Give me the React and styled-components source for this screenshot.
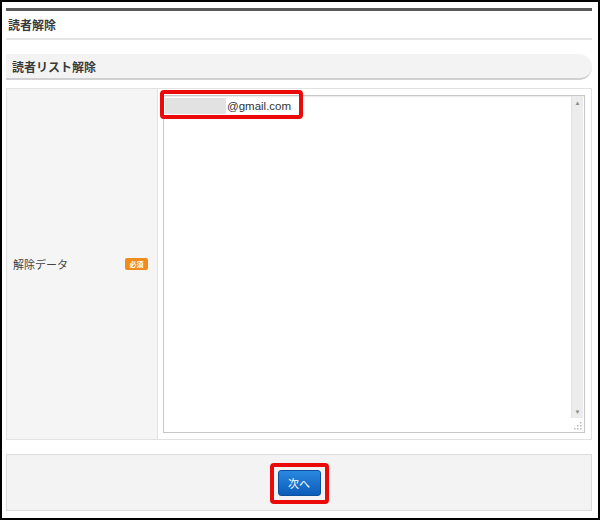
import styled, { createGlobalStyle } from "styled-components";

const GlobalStyle = createGlobalStyle`
  html, body {
    margin: 0;
    padding: 0;
    background: #fff;
  }
  * {
    box-sizing: border-box;
  }
`;

const App = () => {
  return (
    <>
      <GlobalStyle />
      <Frame>
        <PageTitle>読者解除</PageTitle>
        <SectionHeader>読者リスト解除</SectionHeader>
        <FormTable>
          <LabelCell>
            <Label>解除データ</Label>
            <Required>必須</Required>
          </LabelCell>
          <FieldCell>
            <TextBox>
              <TextContent>
                <Line>
                  <Masked />
                  @gmail.com
                </Line>
              </TextContent>
              <ScrollTrack>
                <Arrow>▲</Arrow>
                <Arrow>▼</Arrow>
              </ScrollTrack>
              <Grip>
                <svg width="8" height="8" viewBox="0 0 8 8">
                  <rect x="6" y="0" width="1.5" height="1.5" fill="#bbb" />
                  <rect x="3" y="3" width="1.5" height="1.5" fill="#bbb" />
                  <rect x="6" y="3" width="1.5" height="1.5" fill="#bbb" />
                  <rect x="0" y="6" width="1.5" height="1.5" fill="#bbb" />
                  <rect x="3" y="6" width="1.5" height="1.5" fill="#bbb" />
                  <rect x="6" y="6" width="1.5" height="1.5" fill="#bbb" />
                </svg>
              </Grip>
              <Highlight $top={-6} $left={-4} $width={143} $height={29} />
            </TextBox>
          </FieldCell>
        </FormTable>
        <Footer>
          <ButtonWrap>
            <NextButton>次へ</NextButton>
            <Highlight $top={-7} $left={-8} $width={59} $height={41} />
          </ButtonWrap>
        </Footer>
      </Frame>
    </>
  );
};

const Frame = styled.div`
  width: 600px;
  height: 520px;
  border: 2px solid #000;
  padding: 6px 6px 0 4px;
  font-family: "Liberation Sans", "Noto Sans CJK JP", sans-serif;
  color: #333;
  display: flex;
  flex-direction: column;
`;

const PageTitle = styled.div`
  border-top: 3px solid #5a5a5a;
  border-bottom: 2px solid #e6e6e6;
  height: 32px;
  padding-left: 2px;
  display: flex;
  align-items: center;
  font-size: 12px;
  font-weight: bold;
  color: #3a3a3a;
`;

const SectionHeader = styled.div`
  margin-top: 14px;
  height: 26px;
  background: #f3f3f3;
  border-bottom: 2px solid #d0d0d0;
  border-radius: 0 13px 13px 0;
  padding-left: 6px;
  display: flex;
  align-items: center;
  font-size: 12px;
  font-weight: bold;
  color: #3a3a3a;
`;

const FormTable = styled.div`
  margin-top: 8px;
  height: 352px;
  border: 1px solid #e2e2e2;
  display: flex;
`;

const LabelCell = styled.div`
  width: 151px;
  background: #f4f5f4;
  border-right: 1px solid #e2e2e2;
  display: flex;
  align-items: center;
  justify-content: space-between;
  padding: 0 9px 0 6px;
`;

const Label = styled.span`
  font-size: 11px;
  color: #444;
`;

const Required = styled.span`
  width: 23px;
  height: 12px;
  border-radius: 2px;
  background: #f08c1e;
  color: #fff;
  font-size: 7px;
  font-weight: bold;
  display: flex;
  align-items: center;
  justify-content: center;
`;

const FieldCell = styled.div`
  flex: 1;
  background: #fff;
  padding: 6px 6px 6px 5px;
  display: flex;
`;

const TextBox = styled.div`
  position: relative;
  flex: 1;
  border: 1px solid #c8c8c8;
  box-shadow: inset 0 1px 1px rgba(0, 0, 0, 0.08);
  display: flex;
`;

const TextContent = styled.div`
  flex: 1;
  padding: 1px 1px;
`;

const Line = styled.div`
  display: flex;
  align-items: center;
  font-size: 11.5px;
  color: #333;
  height: 17px;
`;

const Masked = styled.span`
  width: 61px;
  height: 16px;
  background: #e2e2e2;
  margin-right: 1px;
`;

const ScrollTrack = styled.div`
  width: 12px;
  height: 322px;
  margin-right: 1px;
  background: #ececec;
  border-left: 1px solid #e2e2e2;
  display: flex;
  flex-direction: column;
  justify-content: space-between;
  align-items: center;
  padding: 2px 0 1px;
`;

const Arrow = styled.span`
  font-size: 6px;
  line-height: 10px;
  color: #8a8a8a;
`;

const Grip = styled.span`
  position: absolute;
  right: 2px;
  bottom: 2px;
  width: 8px;
  height: 8px;
  display: flex;
`;

const Highlight = styled.span`
  position: absolute;
  top: ${({ $top }) => $top}px;
  left: ${({ $left }) => $left}px;
  width: ${({ $width }) => $width}px;
  height: ${({ $height }) => $height}px;
  border: 4px solid #ea0a0a;
  border-radius: 4px;
  pointer-events: none;
`;

const Footer = styled.div`
  margin-top: 14px;
  height: 57px;
  border: 1px solid #dcdcdc;
  background: #f3f3f3;
  display: flex;
  align-items: center;
  justify-content: center;
`;

const ButtonWrap = styled.div`
  position: relative;
  display: flex;
`;

const NextButton = styled.button`
  width: 43px;
  height: 26px;
  border: 1px solid #0b4f9e;
  border-radius: 3px;
  background: linear-gradient(#2a88e0, #0c5cb8);
  color: #fff;
  font-family: "Noto Sans CJK JP", sans-serif;
  font-size: 11px;
  padding: 0;
  cursor: pointer;
`;

export default App;
